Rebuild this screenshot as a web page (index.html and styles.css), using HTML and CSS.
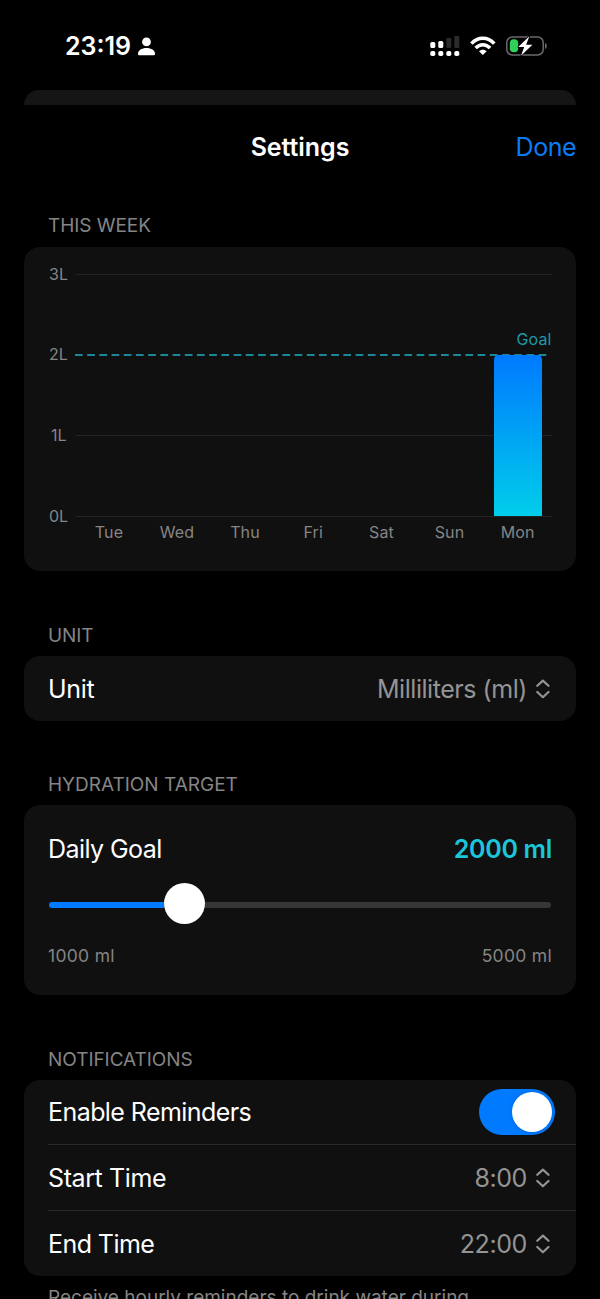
FILE: index.html
```html
<!DOCTYPE html>
<html lang="en">
<head>
<meta charset="utf-8">
<title>Settings</title>
<link rel="stylesheet" href="styles.css">
</head>
<body>
<div class="screen">
  <header class="status">
    <div class="status-left">
      <span class="clock">23:19</span>
      <svg class="person" width="17" height="19" viewBox="0 0 17 19"><circle cx="8.500" cy="4.900" r="4.400"/><path d="M0 16.700C0 13.200 3.600 10.900 8.500 10.900s8.500 2.300 8.500 5.800c0 1-.5 1.500-1.500 1.500H1.500C.5 18.200 0 17.700 0 16.700Z"/></svg>
    </div>
    <svg class="status-icons" width="118" height="22" viewBox="0 0 118 22">
      <g fill="#fff">
        <rect x="0.300" y="6" width="5" height="6" rx="1.600"/><rect x="8.300" y="5" width="5" height="7" rx="1.600"/>
        <rect x="0.300" y="15" width="5" height="5" rx="1.800"/><rect x="8.300" y="15" width="5" height="5" rx="1.800"/><rect x="16.300" y="15" width="5" height="5" rx="1.800"/><rect x="24.300" y="15" width="5" height="5" rx="1.800"/>
      </g>
      <g fill="#2c2c2e"><rect x="16.300" y="2" width="5" height="10" rx="1.300"/><rect x="24.300" y="0" width="5" height="12" rx="1.300"/></g>
      <g fill="none" stroke="#fff" stroke-width="3.500"><path d="M41.400 7.600C48 .5 57.700.5 64.300 7.600"/><path d="M45.600 12C50 7.500 55.700 7.500 60.100 12"/></g>
      <path fill="#fff" d="M52.850 19 49 15.300c2-2.100 5.700-2.100 7.700 0Z"/>
      <rect x="76.800" y="1" width="36.400" height="18" rx="5.500" fill="none" stroke="#6a6a6d" stroke-width="1.500"/>
      <path d="M115 7v6c2.400-.9 2.400-5.100 0-6Z" fill="#6a6a6d"/>
      <rect x="79.800" y="3.300" width="8.400" height="13" rx="4" fill="#30d158"/>
      <path d="M99.400.2 88.200 11h6L91 19.800l11.400-11h-6.300Z" fill="#fff" stroke="#000" stroke-width="1.400" stroke-linejoin="round" paint-order="stroke"/>
    </svg>
  </header>
  <div class="back-sheet"></div>
  <nav class="nav">
    <h1 class="title">Settings</h1>
    <a class="done">Done</a>
  </nav>
  <main class="content">
    <h2 class="label label-week">THIS WEEK</h2>
    <section class="card card-chart">
      <svg class="chart" width="552" height="324" viewBox="24 247 552 324">
        <defs><linearGradient id="water" x1="0" y1="0" x2="0" y2="1"><stop offset="0" stop-color="#007aff"/><stop offset="1" stop-color="#00cdea"/></linearGradient></defs>
        <path class="grid" d="M76 274.500H552M76 435.500H552M76 516.500H552"/>
        <path class="goal" d="M75 355H548"/>
        <path class="bar" d="M494 516V360q0-5 5-5h38q5 0 5 5V516Z" fill="url(#water)"/>
        <g class="axis"><text x="49" y="280">3L</text><text x="49" y="360.400">2L</text><text x="51" y="441">1L</text><text x="49" y="522">0L</text></g>
        <g class="axis days"><text x="109" y="538">Tue</text><text x="177" y="538">Wed</text><text x="245" y="538">Thu</text><text x="313.200" y="538">Fri</text><text x="381.500" y="538">Sat</text><text x="449.500" y="538">Sun</text><text x="517.700" y="538">Mon</text></g>
        <text class="goal-text" x="551.500" y="345">Goal</text>
      </svg>
    </section>

    <h2 class="label label-unit">UNIT</h2>
    <section class="card row row-unit">
      <span class="name n-unit">Unit</span>
      <span class="value v-unit">Milliliters (ml)<svg class="chev" width="16" height="20" viewBox="0 0 16 20"><path d="M1.300 6.800 6.900 1.600 12.500 6.800M1.300 13l5.600 5.200L12.500 13"/></svg></span>
    </section>

    <h2 class="label label-target">HYDRATION TARGET</h2>
    <section class="card card-goal">
      <div class="goal-head"><span class="name">Daily Goal</span><span class="amount">2000 ml</span></div>
      <div class="slider"><div class="fill"></div><div class="thumb"></div><div class="track"></div></div>
      <div class="range"><span>1000 ml</span><span>5000 ml</span></div>
    </section>

    <h2 class="label label-notif">NOTIFICATIONS</h2>
    <section class="card card-notif">
      <div class="row"><span class="name">Enable Reminders</span><div class="switch"><div class="knob"></div></div></div>
      <div class="row line"><span class="name n-start">Start Time</span><span class="value">8:00<svg class="chev" width="16" height="20" viewBox="0 0 16 20"><path d="M1.300 6.800 6.900 1.600 12.500 6.800M1.300 13l5.600 5.200L12.500 13"/></svg></span></div>
      <div class="row line"><span class="name">End Time</span><span class="value">22:00<svg class="chev" width="16" height="20" viewBox="0 0 16 20"><path d="M1.300 6.800 6.900 1.600 12.500 6.800M1.300 13l5.600 5.200L12.500 13"/></svg></span></div>
    </section>
    <p class="note">Receive hourly reminders to drink water during</p>
  </main>
</div>
</body>
</html>
```
FILE: styles.css
```css
* { box-sizing: border-box; margin: 0; padding: 0; }
html, body { background: #000; }
body { font-family: Inter, "Liberation Sans", sans-serif; color: #fff; }
svg { display: block; flex: none; }
.screen { width: 600px; height: 1299px; overflow: hidden; background: #000; }
.status { height: 90px; padding: 36px 52px 0 65px; display: flex; justify-content: space-between; }
.status-left { display: flex; gap: 7px; height: 21px; align-items: center; }
.clock { font-size: 25px; font-weight: 600; line-height: 21px; letter-spacing: 0; }
.person { fill: #fff; }
.status-icons { overflow: visible; }
.back-sheet { height: 15px; margin: 0 24px; background: #151515; border-radius: 15px 15px 0 0; }
.nav { height: 84px; padding: 0 24px; display: grid; grid-template-columns: 1fr auto 1fr; align-items: center; }
.title { grid-column: 2; font-size: 25px; font-weight: 600; letter-spacing: -0.05px; }
.done { justify-self: end; color: #0a7df5; font-size: 25px; letter-spacing: -0.5px; padding-bottom: 1px; }
.content { padding: 0 24px; }
.label { height: 84px; padding: 53px 24px 0; font-size: 19px; line-height: 22px; font-weight: 400; color: #858585; letter-spacing: 0; white-space: nowrap; }
.label-week { height: 58px; padding-top: 26px; letter-spacing: -0.05px; }
.label-unit { height: 84.5px; padding-top: 53.500px; letter-spacing: -0.1px; }
.label-notif { height: 84.5px; padding-top: 53.500px; letter-spacing: -0.05px; }
.card { background: #101010; border-radius: 16px; overflow: hidden; }
.card-chart { height: 324px; }
.grid { stroke: #232323; stroke-width: 1; }
.goal { stroke: #1c8796; stroke-width: 2; stroke-dasharray: 7.700 4.500; }
.axis text { font-size: 16px; fill: #858585; }
.days text { text-anchor: middle; letter-spacing: 0.15px; }
.goal-text { font-size: 16px; fill: #1d99a8; text-anchor: end; letter-spacing: 0.1px; }
.row { height: 66px; padding: 0 24px; display: flex; align-items: center; justify-content: space-between; }
.row-unit { height: 65.5px; padding-top: 1px; }
.name { font-size: 25px; letter-spacing: -0.57px; white-space: nowrap; }
.n-unit { letter-spacing: -0.3px; }
.n-start { letter-spacing: -0.4px; }
.value { display: flex; align-items: center; gap: 9px; color: #949494; font-size: 25px; letter-spacing: -0.4px; white-space: nowrap; }
.v-unit { letter-spacing: -0.45px; }
.chev { fill: none; stroke: #949494; stroke-width: 2.200; stroke-linecap: round; stroke-linejoin: round; }
.card-goal { height: 190px; padding: 28px 24px 0; }
.goal-head { display: flex; justify-content: space-between; height: 32px; align-items: center; }
.amount { font-size: 25px; font-weight: 600; color: #1bc6da; letter-spacing: -0.32px; }
.slider { height: 41px; margin: 18px 1px 0; display: flex; align-items: center; }
.fill { width: 115px; height: 6px; margin-top: 3px; border-radius: 3px 0 0 3px; background: #007aff; }
.thumb { width: 41px; height: 41px; border-radius: 50%; background: #fff; }
.track { flex: 1; height: 6px; margin-top: 3px; border-radius: 0 3px 3px 0; background: #363636; }
.range { display: flex; justify-content: space-between; margin-top: 21px; font-size: 17.500px; line-height: 22px; letter-spacing: 0.3px; color: #858585; }
.card-notif { height: 196.5px; }
.card-notif .row { height: 64.5px; padding-top: 1px; }
.card-notif .line { height: 66px; margin-left: 24px; padding-left: 0; border-top: 1px solid #292929; }
.switch { width: 76px; height: 46px; margin-right: -3px; border-radius: 23px; background: #007aff; padding: 3px; display: flex; justify-content: flex-end; }
.knob { width: 40px; height: 40px; border-radius: 50%; background: #fff; box-shadow: 0 0 5px rgba(0,0,0,.15); }
.note { padding: 11px 24px 0; font-size: 19px; line-height: 22px; color: #858585; white-space: nowrap; }
```
